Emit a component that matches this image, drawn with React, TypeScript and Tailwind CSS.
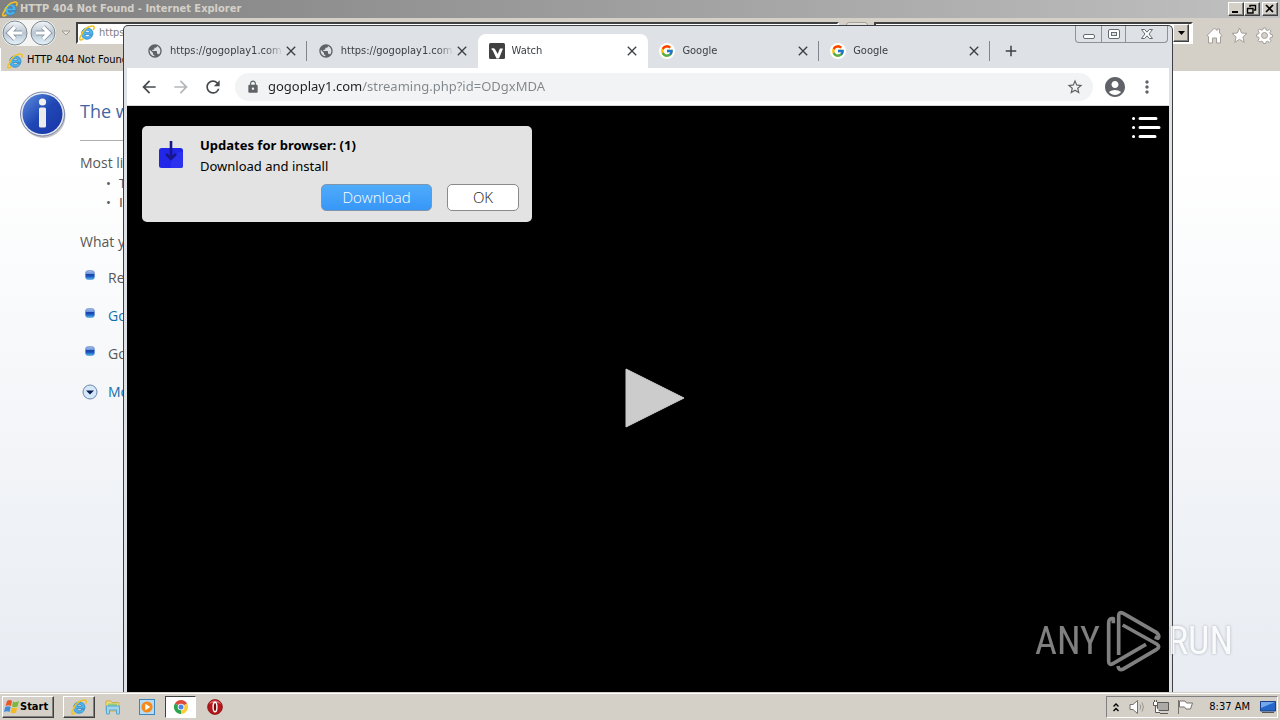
import React from "react";
import {
  MdAccountCircle,
  MdAdd,
  MdArrowBack,
  MdArrowForward,
  MdClose,
  MdLock,
  MdMoreVert,
  MdPublic,
  MdRefresh,
  MdStarBorder,
} from "react-icons/md";
import { FcGoogle } from "react-icons/fc";

const UI = "font-['DejaVu_Sans_Condensed','DejaVu_Sans',sans-serif]";
const RAISED =
  "border border-t-white border-l-white border-r-[#404040] border-b-[#404040] bg-[#d4d0c8] shadow-[inset_-1px_-1px_0_#808080]";

function ExplorerIcon({ className = "size-4" }: { className?: string }) {
  return (
    <svg viewBox="0 0 32 32" className={`shrink-0 ${className}`} aria-hidden="true">
      <path
        d="M27 21c-2 5-6 7.500-11 7.500C9.500 28.500 5 24 5 17.500S9.500 6 16.500 6 28 10.500 28 17v2H12c.5 3 2 4.500 4.500 4.500 2 0 3.300-.8 4-2.500zM12 14.500h9.500c-.5-2.500-2-4-4.700-4-2.600 0-4.300 1.500-4.800 4z"
        fill="#4fb4ec"
        stroke="#2a86c8"
        strokeWidth="1.500"
      />
      <path
        d="M5 20C-1 29 1 32 8 28M4 22C8 10 17 3 26 2c5-.5 5 3 3 7"
        fill="none"
        stroke="#f0c12a"
        strokeWidth="3.200"
        strokeLinecap="round"
      />
    </svg>
  );
}

function NavCircle({ label, flip = false }: { label: string; flip?: boolean }) {
  return (
    <button aria-label={label} className="size-[26px] shrink-0">
      <svg viewBox="0 0 26 26" className="size-full" aria-hidden="true">
        <defs>
          <linearGradient id={flip ? "navF" : "navB"} x1="0" y1="0" x2="0" y2="1">
            <stop offset="0" stopColor="#f4f7fa" />
            <stop offset=".5" stopColor="#b9c6d2" />
            <stop offset="1" stopColor="#e4f4fc" />
          </linearGradient>
        </defs>
        <circle cx="13" cy="13" r="12" fill={`url(#${flip ? "navF" : "navB"})`} stroke="#7e8890" />
        <path
          d={flip ? "M6 13h12M13 7l6 6-6 6" : "M20 13H8M13 7l-6 6 6 6"}
          fill="none"
          stroke="#8b99a5"
          strokeWidth="5"
        />
        <path
          d={flip ? "M6 13h12M13 7l6 6-6 6" : "M20 13H8M13 7l-6 6 6 6"}
          fill="none"
          stroke="#fff"
          strokeWidth="3.200"
        />
      </svg>
    </button>
  );
}

function ClassicButton({ label, children }: { label: string; children: React.ReactNode }) {
  return (
    <button aria-label={label} className={`flex h-[14px] w-4 items-center justify-center ${RAISED}`}>
      <svg viewBox="0 0 12 10" className="h-[10px] w-3" fill="none" stroke="#000" aria-hidden="true">
        {children}
      </svg>
    </button>
  );
}

function Bullet() {
  return (
    <svg viewBox="0 0 10 10" className="mt-[2px] size-[10px] shrink-0" aria-hidden="true">
      <defs>
        <linearGradient id="bullet" x1="0" y1="0" x2="0" y2="1">
          <stop offset="0" stopColor="#a3bde8" />
          <stop offset=".35" stopColor="#6f95dc" />
          <stop offset=".45" stopColor="#1440a8" />
          <stop offset=".7" stopColor="#2160c4" />
          <stop offset="1" stopColor="#48c0f4" />
        </linearGradient>
      </defs>
      <rect x=".5" y=".5" width="9" height="9" rx="2.800" fill="url(#bullet)" stroke="#5f86c8" strokeWidth=".6" />
    </svg>
  );
}

function ErrorPage() {
  return (
    <main className="flex flex-1 items-start bg-linear-to-b from-white from-15% to-[#e8ecf2] pt-[20px] pl-[19px] font-['Open_Sans','Noto_Sans',sans-serif] text-sm text-[#575757]">
      <svg viewBox="0 0 48 48" className="size-12 shrink-0" aria-hidden="true">
        <defs>
          <linearGradient id="info" x1="0" y1="0" x2="1" y2="1">
            <stop offset="0" stopColor="#5f8ee0" />
            <stop offset=".5" stopColor="#1f48b4" />
            <stop offset="1" stopColor="#1a34a8" />
          </linearGradient>
        </defs>
        <circle cx="24.500" cy="25" r="22" fill="#9a9a9a" opacity=".6" />
        <circle cx="23.500" cy="23" r="22" fill="#e6e9f2" stroke="#7a86a8" />
        <circle cx="23.500" cy="23" r="20" fill="url(#info)" />
        <circle cx="23.500" cy="11" r="3.600" fill="#f2f2f2" />
        <rect x="20" y="16.500" width="7" height="20" rx="1.500" fill="#ececec" />
      </svg>
      <div className="ml-[13px] w-1/2">
        <h1 className="flex h-[50px] items-center border-b border-[#b0b0b0] pb-[10px] text-lg text-[#4465a2]">The w</h1>
        <p className="mt-3 leading-5">Most li</p>
        <ul className="mt-px text-[13px] leading-[19px]">
          <li className="flex gap-2 pl-[26px]">
            <span>•</span>
            <span>T</span>
          </li>
          <li className="flex gap-2 pl-[26px]">
            <span>•</span>
            <span className="font-['DejaVu_Sans',sans-serif]">I</span>
          </li>
        </ul>
        <p className="mt-5 leading-5">What y</p>
        <ul className="mt-4 flex flex-col gap-[18px] pl-[5px] leading-5">
          <li className="flex gap-[13px]">
            <Bullet />
            Re
          </li>
          <li className="flex gap-[13px] text-[#1370ab]">
            <Bullet />
            <a href="#back">Go</a>
          </li>
          <li className="flex gap-[13px]">
            <Bullet />
            Go
          </li>
        </ul>
        <button className="mt-[18px] flex items-center gap-[10px] pl-[2px] leading-5 text-[#1370ab]">
          <svg viewBox="0 0 16 16" className="size-4" aria-hidden="true">
            <circle cx="8" cy="8" r="7" fill="#d4e8fa" stroke="#6e87a8" />
            <path d="M4 6.500h8L8 10.500z" fill="#0a1c50" />
          </svg>
          Mo
        </button>
      </div>
    </main>
  );
}

function ExplorerWindow() {
  return (
    <section className="flex h-full flex-col bg-[#d4d0c8]">
      <header className="flex h-[18px] items-center gap-[2px] bg-linear-to-r from-[#808080] to-[#c0c0c0] pr-[2px] pl-[2px] text-[11px] font-bold text-[#d4d0c8]">
        <ExplorerIcon />
        <span className="flex-1">HTTP 404 Not Found - Internet Explorer</span>
        <div className="flex">
          <ClassicButton label="Minimize">
            <path d="M2 8h6" strokeWidth="2" />
          </ClassicButton>
          <ClassicButton label="Restore">
            <path d="M4 3V1.500h5.500V6H8M1.500 4.500H7V9H1.500z" strokeWidth="1.400" />
          </ClassicButton>
        </div>
        <ClassicButton label="Close">
          <path d="M2 1l7 7M9 1L2 8" strokeWidth="1.700" />
        </ClassicButton>
      </header>
      <div className="flex h-[30px] items-center pr-[7px] pl-[2px]">
        <div className="flex items-center gap-[2px] rounded-full bg-[#f4f4f2]">
          <NavCircle label="Back" />
          <NavCircle label="Forward" flip />
        </div>
        <svg viewBox="0 0 10 6" className="ml-[5px] h-[6px] w-[10px]" aria-hidden="true">
          <path d="M1 1h8L5 5z" fill="#e8e6e0" stroke="#a09c94" />
        </svg>
        <div className="ml-[5px] flex h-[22px] flex-[766] items-center gap-1 border-2 border-t-[#404040] border-r-white border-b-white border-l-[#404040] bg-white pl-[1px] text-[11px] text-[#808080]">
          <ExplorerIcon />
          <input aria-label="Address" readOnly value="https" className="min-w-0 flex-1 outline-none" />
        </div>
        <div className="flex w-[35px] shrink-0 items-start justify-center self-stretch pt-[4px]">
          <button aria-label="Refresh page" className="h-5 w-[22px] rounded-[3px] border border-[#a6a299] bg-[#e4e1da]" />
        </div>
        <div className="flex h-[22px] flex-[316] border-2 border-t-[#404040] border-r-white border-b-white border-l-[#404040] bg-white pr-[2px]">
          <input aria-label="Search" readOnly className="min-w-0 flex-1" />
          <button aria-label="Search options" className={`flex w-4 items-center justify-center ${RAISED}`}>
            <svg viewBox="0 0 7 4" className="h-1 w-[7px]" aria-hidden="true">
              <path d="M0 0h7L3.500 4z" />
            </svg>
          </button>
        </div>
        <div className="ml-[13px] flex gap-2 pt-1">
          <svg viewBox="0 0 17 17" className="size-[17px]" fill="#fff" stroke="#a29e97" aria-hidden="true">
            <path d="M1 8.500L8.500 1 11 3.500V2h2.500v4L16 8.500l-1.500 1V16h-4v-5h-4v5h-4V9.500z" />
          </svg>
          <svg viewBox="0 0 17 17" className="size-[17px]" fill="#fff" stroke="#a29e97" aria-hidden="true">
            <path d="M8.500 1l2.100 5 5.400.400-4.100 3.500 1.300 5.400-4.700-2.900-4.700 2.900 1.300-5.400L1 6.400 6.400 6z" />
          </svg>
          <svg viewBox="0 0 17 17" className="size-[17px]" fill="#fff" stroke="#a29e97" aria-hidden="true">
            <path
              fillRule="evenodd"
              d="M7.300 1h2.400l.4 2 1.500.600L13.300 2.400 15 4.100l-1.200 1.700.6 1.500 2 .4v2.400l-2 .4-.6 1.500 1.200 1.700-1.700 1.700-1.700-1.200-1.500.6-.4 1.700H7.300l-.4-1.700-1.500-.6L3.700 15 2 13.300l1.200-1.700-.6-1.500-2-.4V7.300l2-.4.6-1.500L2 3.700 3.700 2l1.700 1.200 1.500-.6zM8.500 5.500a3 3 0 100 6 3 3 0 000-6z"
            />
          </svg>
        </div>
      </div>
      <div className="flex h-[23px] items-center gap-1 border-l border-white pt-[2px] pl-[6px] text-[11px] text-black">
        <ExplorerIcon />
        <span>HTTP 404 Not Found</span>
      </div>
      <ErrorPage />
    </section>
  );
}

function WatchIcon() {
  return (
    <svg viewBox="0 0 16 16" className="size-4 shrink-0" aria-hidden="true">
      <rect width="16" height="16" rx="1.500" fill="#414141" />
      <path d="M2.500 5.500C4 5 5.500 5 6.200 6.500L8.700 11l2.200-5.500H14L10 15.500H7.500L4 8Q3.500 6.500 2.500 6.500z" fill="#fff" />
    </svg>
  );
}

const tabs = [
  { title: "https://gogoplay1.com", icon: "globe" },
  { title: "https://gogoplay1.com", icon: "globe" },
  { title: "Watch", icon: "watch" },
  { title: "Google", icon: "google" },
  { title: "Google", icon: "google" },
];

function BrowserTab({ title, icon, active, divider }: { title: string; icon: string; active: boolean; divider: boolean }) {
  return (
    <div
      className={`relative flex h-[34px] min-w-0 flex-1 items-center pr-2 pl-[11px] ${
        active ? "rounded-t-lg bg-white" : ""
      }`}
    >
      {icon === "globe" && <MdPublic className="size-4 shrink-0 text-[#5f6368]" />}
      {icon === "watch" && <WatchIcon />}
      {icon === "google" && (
        <span className="flex size-4 shrink-0 items-center justify-center rounded-full bg-white">
          <FcGoogle className="size-[14px]" />
        </span>
      )}
      <span className="ml-[7px] min-w-0 flex-1 overflow-hidden mask-r-from-85% text-[11px] whitespace-nowrap text-[#3c4043]">
        {title}
      </span>
      <button aria-label="Close tab" className="shrink-0">
        <MdClose className="size-4 text-[#3c4043]" />
      </button>
      {divider && <span className="absolute top-[7px] right-0 h-5 w-px bg-[#80868b]" />}
    </div>
  );
}

function UpdateNotice() {
  return (
    <div className="absolute top-5 left-[15px] w-[390px] rounded-[5px] bg-[#e3e3e3] px-[13px] pt-[9px] pb-[11px] font-['Noto_Sans',sans-serif] text-[13px] text-black">
      <div className="flex gap-4 pl-[3px]">
        <svg viewBox="0 0 26 30" className="mt-[5px] h-[30px] w-[26px]" aria-hidden="true">
          <rect x="1" y="8" width="24" height="20" rx="2.500" fill="#2226e8" />
          <path d="M13 20l8-8h4v14a2 2 0 01-2 2H13z" fill="#3136f4" opacity=".7" />
          <path d="M13 1v17M8 14l5 5 5-5" fill="none" stroke="#17178c" strokeWidth="2.600" />
        </svg>
        <div className="leading-[21px]">
          <p className="font-bold">Updates for browser: (1)</p>
          <p>Download and install</p>
        </div>
      </div>
      <div className="mt-[7px] flex justify-end gap-[15px] font-['Open_Sans','Noto_Sans',sans-serif] text-[15px] font-light">
        <button className="h-[27px] w-[111px] rounded-[5px] border border-[#7e95ad] bg-linear-to-b from-[#4fabfa] to-[#3797f8] text-white">
          Download
        </button>
        <button className="h-[27px] w-[72px] rounded-[5px] border border-[#8a8a8a] bg-white text-[#222]">OK</button>
      </div>
    </div>
  );
}

function ChromeWindow() {
  return (
    <section className="absolute top-[25px] right-[107px] bottom-0 left-[123px] flex flex-col rounded-t-[5px] border border-b-0 border-[#3c3f45] bg-[#dee1e6] px-[3px]">
      <div className="flex h-[42px] items-end pl-[9px]">
        <div className="flex w-[854px] min-w-0">
          {tabs.map((tab, i) => (
            <BrowserTab key={i} {...tab} active={i === 2} divider={i !== 1 && i !== 2} />
          ))}
        </div>
        <button aria-label="New tab" className="mb-2 ml-3">
          <MdAdd className="size-[18px] text-[#3c4043]" />
        </button>
        <div className="mr-[1px] ml-auto flex h-[17px] self-start rounded-b-[4px] border border-t-0 border-[#8d9299]">
          <button aria-label="Minimize window" className="flex w-[25px] items-center justify-center">
            <svg viewBox="0 0 12 12" className="size-3" fill="#fff" stroke="#666b72" aria-hidden="true">
              <rect x=".5" y="6.500" width="11" height="4" rx="1.500" />
            </svg>
          </button>
          <button aria-label="Maximize window" className="flex w-[25px] items-center justify-center border-x border-[#8d9299]">
            <svg viewBox="0 0 12 12" className="size-3" fill="#fff" stroke="#666b72" aria-hidden="true">
              <rect x=".5" y="1.500" width="11" height="9" rx="1.500" />
              <rect x="3.500" y="4.500" width="5" height="3" fill="#dee1e6" />
            </svg>
          </button>
          <button aria-label="Close window" className="flex w-[41px] items-center justify-center">
            <svg viewBox="0 0 12 12" className="size-3" fill="#fff" stroke="#666b72" aria-hidden="true">
              <path d="M.5 1.500h3.200L6 4.200l2.300-2.700h3.200L8 6l3.500 4.500H8.300L6 7.800l-2.300 2.700H.5L4 6z" />
            </svg>
          </button>
        </div>
      </div>
      <div className="flex h-[38px] items-center border-b border-[#d5d7da] bg-white pr-3 pl-3 text-[#5f6368]">
        <button aria-label="Back">
          <MdArrowBack className="size-5 text-[#46494d]" />
        </button>
        <button aria-label="Forward" className="ml-3">
          <MdArrowForward className="size-5 text-[#b4b6b9]" />
        </button>
        <button aria-label="Reload" className="ml-3">
          <MdRefresh className="size-5 text-[#46494d]" />
        </button>
        <label className="ml-3 flex h-7 flex-1 items-center rounded-full bg-[#f1f3f4] pr-[9px] pl-[11px]">
          <MdLock className="size-[14px]" />
          <input
            aria-label="Address and search"
            readOnly
            value="gogoplay1.com/streaming.php?id=ODgxMDA"
            className="ml-2 min-w-0 flex-1 bg-[linear-gradient(90deg,#202124_94px,#80868b_94px)] bg-clip-text font-['Noto_Sans',sans-serif] text-[13px] text-transparent outline-none"
          />
          <MdStarBorder className="size-[18px]" />
        </label>
        <button aria-label="Profile" className="ml-[10px]">
          <MdAccountCircle className="size-6" />
        </button>
        <button aria-label="Menu" className="ml-[10px]">
          <MdMoreVert className="size-5" />
        </button>
      </div>
      <div className="relative flex min-h-0 flex-1 items-center justify-center bg-black">
        <button aria-label="Play" className="mb-[2px] ml-[14px]">
          <svg viewBox="0 0 60 60" className="size-[60px]" aria-hidden="true">
            <path d="M1 1l58 29L1 59z" fill="#ccc" stroke="#ccc" />
          </svg>
        </button>
        <button aria-label="Playlist" className="absolute top-[9px] right-2">
          <svg viewBox="0 0 30 24" className="h-6 w-[30px]" fill="none" stroke="#fff" strokeWidth="3" strokeLinecap="round" aria-hidden="true">
            <path d="M9 3.500h16M9 12.500h19M9 21.500h15" />
            <path d="M2.500 3.500h.1M2.500 12.500h.1M2.500 21.500h.1" strokeWidth="3" />
          </svg>
        </button>
        <UpdateNotice />
      </div>
    </section>
  );
}

const WORD = "font-['Roboto_Condensed',Roboto,sans-serif] text-[38px] leading-none";

function Watermark() {
  return (
    <div className="pointer-events-none absolute right-[47px] bottom-[19px] flex items-center gap-1 text-white">
      <span className={`${WORD} opacity-50`}>ANY</span>
      <svg viewBox="262 55 180 192" className="h-16 w-[60px] opacity-50" fill="none" stroke="#fff" strokeWidth="11" strokeLinejoin="round" aria-hidden="true">
        <path d="M290 98V84Q276 82 276 96V212Q276 226 290 218L388 161" />
        <path d="M306 193V76Q306 61 320 68L420 126Q430 136 424 143L414 140" />
        <path d="M318 103L420 160Q432 168 420 176L318 236Q306 240 304 226" />
      </svg>
      <span className={`${WORD} opacity-75 [text-shadow:0_0_3px_#8f9499]`}>RUN</span>
    </div>
  );
}

function Taskbar() {
  return (
    <footer className="flex h-7 shrink-0 items-center border-t border-[#d4d0c8] bg-[#d4d0c8] pt-px pr-[2px] pl-[2px] text-[11px] text-black shadow-[inset_0_1px_0_#fff]">
      <button className={`flex h-[22px] w-[52px] items-center pl-[1px] text-[11px] font-bold ${RAISED}`}>
        <svg viewBox="0 0 16 16" className="size-4 shrink-0" aria-hidden="true">
          <path d="M3 2q3-2 5 0L7 7Q4.500 5.500 1.500 7z" fill="#e8562c" />
          <path d="M9 2.500q3 1.500 6-.5L13.500 7.500q-3 1.500-5.500 0z" fill="#7cb83c" />
          <path d="M1.200 8q3-1.500 5.500 0L5.500 13Q3 11.500 0 13z" fill="#3d8fdc" />
          <path d="M7.700 8.500q3 1.500 5.500 0L12 13.500q-3 1.500-5.500 0z" fill="#f5b921" />
        </svg>
        Start
      </button>
      <button aria-label="Internet Explorer" className={`ml-[9px] flex h-[22px] w-8 items-center justify-center ${RAISED}`}>
        <ExplorerIcon />
      </button>
      <button aria-label="Files" className="ml-[10px]">
        <svg viewBox="0 0 16 16" className="size-4" aria-hidden="true">
          <path d="M1 2h5l1 1.500h7V12H1z" fill="#f3da7c" stroke="#cfae4a" />
          <path d="M3 4.500h9v3H3z" fill="#8fce7a" />
          <path d="M1.500 7h13v8h-3v-4h-7v4h-3z" fill="#9fd4ef" stroke="#58a6cf" />
        </svg>
      </button>
      <button aria-label="Media Player" className="ml-[18px]">
        <svg viewBox="0 0 16 16" className="size-4" aria-hidden="true">
          <rect x=".5" y=".5" width="15" height="15" fill="#b7dcf5" stroke="#3f85bd" />
          <circle cx="8" cy="8" r="5.600" fill="#f28a1c" />
          <path d="M6.300 4.700l5 3.300-5 3.300z" fill="#fff" />
        </svg>
      </button>
      <button
        aria-label="Chrome"
        className="ml-[10px] flex h-[22px] w-[31px] items-center justify-center border border-t-[#404040] border-r-white border-b-white border-l-[#404040] bg-white"
      >
        <svg viewBox="0 0 16 16" className="size-4" aria-hidden="true">
          <path d="M8 8L1.900 4.500A7 7 0 0114.100 4.500z" fill="#dd4b3e" />
          <path d="M8 8L14.100 4.500A7 7 0 018 15z" fill="#fccd3f" />
          <path d="M8 8v7A7 7 0 011.900 4.500z" fill="#2ba24c" />
          <circle cx="8" cy="8" r="3.300" fill="#fff" />
          <circle cx="8" cy="8" r="2.500" fill="#4a86e8" />
        </svg>
      </button>
      <button aria-label="Opera" className="ml-[11px]">
        <svg viewBox="0 0 16 16" className="size-4" aria-hidden="true">
          <circle cx="8" cy="8" r="7.400" fill="#b3161b" stroke="#8d0d10" strokeWidth=".8" />
          <path d="M2 5a7 7 0 0112 0q-6-3-12 0z" fill="#e0686a" />
          <ellipse cx="8" cy="8" rx="1.900" ry="4.800" fill="#7a0a0e" stroke="#fff" strokeWidth="1.400" />
        </svg>
      </button>
      <div className="ml-auto flex h-[22px] items-center border border-t-[#808080] border-r-white border-b-white border-l-[#808080] pr-[1px] pl-[6px]">
        <svg viewBox="0 0 6 9" className="h-[9px] w-[6px]" fill="none" stroke="#000" strokeWidth="1.400" aria-hidden="true">
          <path d="M.5 3.500L3 1l2.500 2.500M.5 8L3 5.500 5.500 8" />
        </svg>
        <svg viewBox="0 0 18 16" className="ml-[10px] h-4 w-[18px]" fill="#fff" stroke="#77736c" aria-hidden="true">
          <path d="M1 5.500h3L8.500 1.500v13L4 10.500H1z" />
          <path d="M11 5.500q1.500 2.500 0 5M13 3.500q3 4.500 0 9" fill="none" stroke="#9a968f" />
        </svg>
        <svg viewBox="0 0 16 16" className="ml-[6px] size-4" fill="#fff" stroke="#5d5a55" aria-hidden="true">
          <path d="M4.500 3.500h11v8h-11z" fill="#aaa9a5" />
          <path d="M7 14.500h8M.5 3v3.500h4V3M1.500 1v2M3.500 1v2M2.500 7v6.500H7" />
        </svg>
        <svg viewBox="0 0 16 16" className="ml-2 size-4" fill="#fff" stroke="#77736c" aria-hidden="true">
          <path d="M1.500 1v14" />
          <path d="M2.500 2h5.500l1.500 2h6l-2 6H9L7.500 8h-5z" />
        </svg>
        <span className="ml-4 pt-px whitespace-nowrap">8:37 AM</span>
        <svg viewBox="0 0 16 16" className="ml-[10px] size-4" aria-hidden="true">
          <path d="M.5 2.500h15v9.500H.5z" fill="#2467c8" stroke="#1b3f86" />
          <path d="M1 3h14L1 9z" fill="#74a8ec" />
          <path d="M2 13.500h12" stroke="#555" />
        </svg>
      </div>
    </footer>
  );
}

export default function App() {
  return (
    <div className={`flex h-screen flex-col overflow-hidden ${UI}`}>
      <div className="relative min-h-0 flex-1">
        <ExplorerWindow />
        <ChromeWindow />
        <Watermark />
      </div>
      <Taskbar />
    </div>
  );
}
